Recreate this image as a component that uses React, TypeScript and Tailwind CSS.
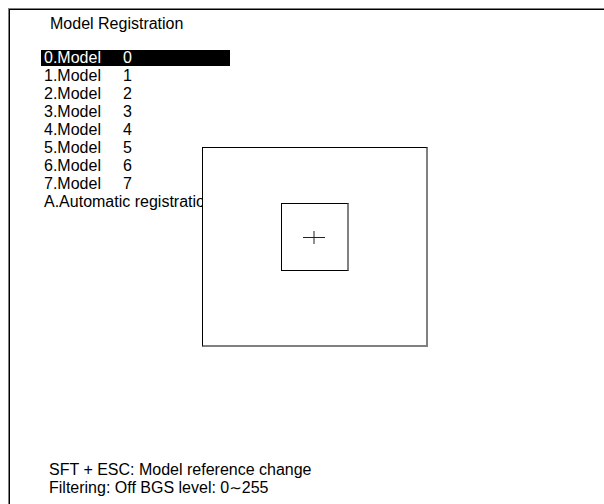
const models = ['0', '1', '2', '3', '4', '5', '6', '7'];

export default function App() {
  return (
    <div className="relative w-[604px] h-[504px] overflow-hidden bg-white text-black font-['Liberation_Sans',Arial,sans-serif] text-[16px] leading-[18px]">
      {/* sunken outer frame, runs off the right and bottom edges */}
      <div className="ml-2 mt-2 h-[520px] border-t border-l border-[#808080]">
        <div className="flex h-full flex-col border-t border-l border-black">
          <div className="pl-[40px] pt-[5px]">Model Registration</div>

          <div className="mt-[16px] pl-[31px]">
            {models.map((n) => (
              <div key={n} className="h-[18px] py-[1px]">
                <div className={n === '0' ? 'flex h-[16px] w-[189px] items-center bg-black pl-[3px] text-white' : 'flex h-[16px] items-center pl-[3px]'}>
                  <span className="w-[79px]">{n}.Model</span>
                  <span>{n}</span>
                </div>
              </div>
            ))}
            <div className="flex h-[18px] items-center pl-[3px]">A.Automatic registration</div>
          </div>

          <div className="mt-[250px] pl-[39px]">
            <div>SFT + ESC: Model reference change</div>
            <div>
              Filtering: Off BGS level: 0<span className="font-['DejaVu_Sans',sans-serif] text-[15px]">∼</span>255
            </div>
          </div>
        </div>
      </div>

      {/* camera view window lies over the list */}
      <div className="absolute left-[202px] top-[147px] flex h-[200px] w-[226px] justify-center border-t border-l border-black border-r-2 border-b-2 border-r-[#808080] border-b-[#808080] bg-white pt-[55px]">
        <div className="flex h-[68px] w-[68px] items-center justify-center border-t border-l border-black border-r-2 border-b border-r-[#808080] bg-white">
          <svg width="22" height="13" viewBox="0 0 22 13">
            <path d="M0 6.5H22M11 0V13" stroke="#222" strokeWidth="1" />
          </svg>
        </div>
      </div>
    </div>
  );
}
